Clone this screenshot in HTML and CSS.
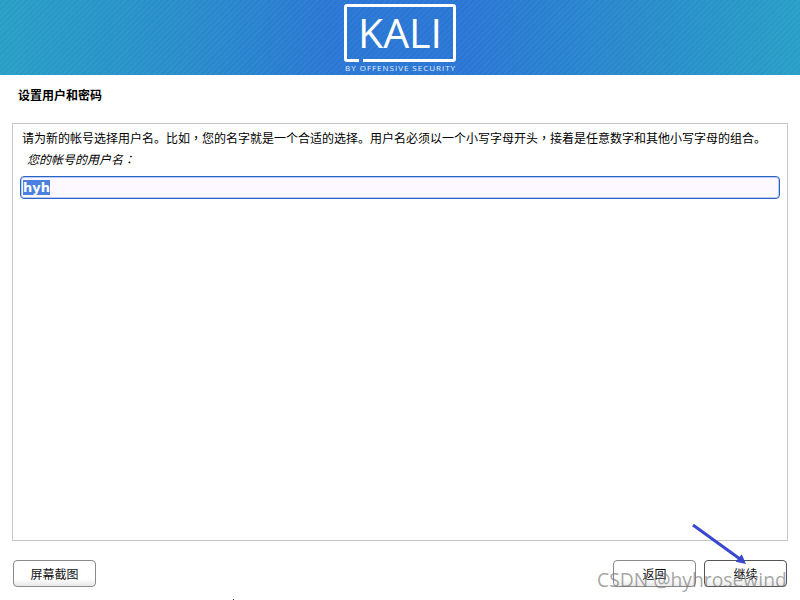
FILE: index.html
```html
<!DOCTYPE html>
<html lang="zh-Hans">
<head>
<meta charset="utf-8">
<title>设置用户和密码</title>
<link rel="stylesheet" href="styles.css">
</head>
<body>
<div class="page">
  <header class="banner">
    <svg class="logo" width="116" height="75" viewBox="0 0 116 75">
      <path class="frame" d="M17 60.500H5Q3.500 60.500 3.500 59V7Q3.500 5.500 5 5.500H111Q112.500 5.500 112.500 7V59Q112.500 60.500 111 60.500H21"/>
      <text class="logo-main" x="58" y="47.500" text-anchor="middle">KALI</text>
      <text class="logo-sub" x="58" y="70.500" text-anchor="middle" textLength="110">BY OFFENSIVE SECURITY</text>
    </svg>
  </header>
  <h1 class="title">设置用户和密码</h1>
  <main class="panel">
    <p class="desc">请为新的帐号选择用户名。比如<span class="mid" lang="zh-Hant">，</span>您的名字就是一个合适的选择。用户名必须以一个小写字母开头<span class="mid" lang="zh-Hant">，</span>接着是任意数字和其他小写字母的组合。</p>
    <p class="label">您的帐号的用户名<span class="mid" lang="zh-Hant">：</span></p>
    <div class="field"><span class="selected">hyh</span></div>
  </main>
  <footer class="actions">
    <button class="btn">屏幕截图</button>
    <div class="nav">
      <button class="btn">返回</button>
      <button class="btn">继续</button>
    </div>
  </footer>
</div>
<i class="speck"></i>
<svg class="arrow" width="70" height="50" viewBox="0 0 70 50">
  <path class="arrow-line" d="M2 2L49 36"/>
  <path class="arrow-head" d="M55 41L44.700 38.700L50.700 31.300Z"/>
</svg>
<div class="watermark">CSDN @hyhrosewind</div>
</body>
</html>
```
FILE: styles.css
```css
* { box-sizing: border-box; }
html, body { margin: 0; height: 100%; background: #fff; overflow: hidden; }
body { font-family: "Liberation Sans", "Noto Sans CJK SC", sans-serif; color: #000; position: relative; }
.page { width: 800px; height: 600px; display: flex; flex-direction: column; }
.banner {
  height: 75px;
  flex: none;
  display: flex;
  justify-content: center;
  background:
    repeating-linear-gradient(135deg, rgba(255,255,255,.025) 0 2px, rgba(0,0,0,.015) 2px 4px),
    linear-gradient(90deg, #29a0c8 0%, #2a8fcb 22%, #2b78d5 42%, #2b78d6 58%, #2a8dcc 80%, #29a0c8 100%);
}
.logo { display: block; }
.frame { fill: none; stroke: #fff; stroke-width: 3; }
.logo-main { font-family: "Open Sans", sans-serif; font-size: 41px; font-weight: 500; fill: #fff; }
.logo-sub { font-family: "Open Sans", sans-serif; font-size: 8px; fill: #e4eefa; }
.title { margin: 14px 0 0 18px; height: 34px; font-size: 12px; line-height: 15px; font-weight: 700; flex: none; }
.panel { margin: 0 12px; height: 418px; flex: none; border: 1px solid #c6c6c6; padding: 6px 7px 0 7px; }
.desc { margin: 0 0 0 2px; font-size: 12px; line-height: 16px; height: 16px; white-space: nowrap; }
.label { margin: 5px 0 0 7px; font-size: 12px; line-height: 16px; height: 16px; font-style: italic; }
.mid { font-family: "Noto Sans CJK TC", sans-serif; }
.field {
  margin-top: 9px;
  height: 23px;
  border: 1px solid #2a62c8;
  border-radius: 4px;
  box-shadow: inset 0 0 0 1px #b9cdf0;
  background: #fdf8ff;
  padding: 3px 2px 0;
  font-family: "DejaVu Sans", sans-serif;
  font-size: 13px;
  line-height: 15px;
  font-weight: 700;
}
.selected { display: inline-block; background: #4a80e0; color: #fff; height: 15px; }
.actions { margin: 19px 13px 0; display: flex; justify-content: space-between; flex: none; }
.nav { display: flex; gap: 8px; }
.btn {
  width: 83px;
  height: 27px;
  padding: 0;
  border: 1px solid #8a8a8a;
  border-radius: 4px;
  background: linear-gradient(180deg, #fff 0%, #fff 70%, #e8e8e8 100%);
  font-family: "Liberation Sans", "Noto Sans CJK SC", sans-serif;
  font-size: 12px;
  color: #111;
}
.nav .btn:last-child { border-color: #555; }
.speck { position: absolute; left: 233px; top: 599px; width: 1px; height: 1px; background: #222; }
.arrow { position: absolute; left: 691px; top: 523px; }
.arrow-line { stroke: #3a48cf; stroke-width: 3; fill: none; }
.arrow-head { fill: #3a48cf; }
.watermark {
  position: absolute;
  left: 597px;
  top: 568px;
  font-family: "Open Sans", sans-serif;
  font-size: 19.300px;
  line-height: 24px;
  color: rgba(110,110,110,.62);
  white-space: nowrap;
}
```
